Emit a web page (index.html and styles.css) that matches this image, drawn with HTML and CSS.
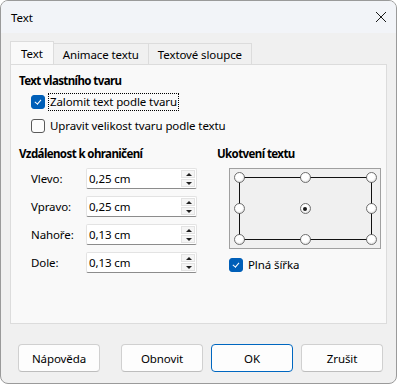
FILE: index.html
```html
<html>
<head>
<link rel="stylesheet" href="styles.css">
</head>
<body>
  <div class="window">
    <div class="titlebar">
      <span class="title">Text</span>
      <svg class="close" width="12" height="12" viewBox="0 0 12 12">
        <path d="M1 1 L11 11 M11 1 L1 11" stroke="#1a1a1a" stroke-width="1" fill="none"/>
      </svg>
    </div>

    <div class="content">
      <div class="tabs">
        <div class="tab active">Text</div>
        <div class="tab">Animace textu</div>
        <div class="tab">Textové sloupce</div>
      </div>

      <div class="panel">
        <div class="heading">Text vlastního tvaru</div>
        <div class="check-row first">
          <span class="checkbox checked"></span>
          <span class="label focused">Zalomit text podle tvaru</span>
        </div>
        <div class="check-row">
          <span class="checkbox"></span>
          <span class="label">Upravit velikost tvaru podle textu</span>
        </div>

        <div class="columns">
          <div class="col-left">
            <div class="heading">Vzdálenost k ohraničení</div>
            <div class="fields">
              <div class="field">
                <span class="field-label">Vlevo:</span>
                <div class="spin"><span class="spin-value">0,25 cm</span><span class="spin-btns"><span class="up"></span><span class="down"></span></span></div>
              </div>
              <div class="field">
                <span class="field-label">Vpravo:</span>
                <div class="spin"><span class="spin-value">0,25 cm</span><span class="spin-btns"><span class="up"></span><span class="down"></span></span></div>
              </div>
              <div class="field">
                <span class="field-label">Nahoře:</span>
                <div class="spin"><span class="spin-value">0,13 cm</span><span class="spin-btns"><span class="up"></span><span class="down"></span></span></div>
              </div>
              <div class="field">
                <span class="field-label">Dole:</span>
                <div class="spin"><span class="spin-value">0,13 cm</span><span class="spin-btns"><span class="up"></span><span class="down"></span></span></div>
              </div>
            </div>
          </div>

          <div class="col-right">
            <div class="heading">Ukotvení textu</div>
            <div class="anchor-box">
              <div class="anchor-rect"></div>
              <div class="anchor-grid">
                <span class="radio"></span><span class="radio"></span><span class="radio"></span>
                <span class="radio"></span><span class="radio selected"></span><span class="radio"></span>
                <span class="radio"></span><span class="radio"></span><span class="radio"></span>
              </div>
            </div>
            <div class="check-row full-width">
              <span class="checkbox checked"></span>
              <span class="label">Plná šířka</span>
            </div>
          </div>
        </div>
      </div>

      <div class="buttons">
        <div class="button help">Nápověda</div>
        <div class="button">Obnovit</div>
        <div class="button default">OK</div>
        <div class="button">Zrušit</div>
      </div>
    </div>
  </div>
</body>
</html>
```

FILE: styles.css
```css
body {
  margin: 0;
  background: #ffffff;
  font-family: "Noto Sans", "Open Sans", sans-serif;
  font-size: 11.5px;
  letter-spacing: -0.1px;
  color: #000000;
}

.window {
  width: 395px;
  height: 382px;
  border: 1px solid #9a9a9a;
  border-radius: 8px;
  background: #f0f0f0;
  overflow: hidden;
}

.titlebar {
  height: 32px;
  background: #f2f4f8;
  display: flex;
  align-items: center;
  justify-content: space-between;
  padding: 0 9px 0 10px;
}

.content {
  padding: 8px 0 0 9px;
}

.tabs {
  display: flex;
  height: 23px;
  align-items: flex-end;
}

.tab {
  height: 21px;
  line-height: 21px;
  padding: 0 9px;
  border: 1px solid #dcdcdc;
  border-bottom: none;
  border-left: none;
  background: #f0f0f0;
  box-sizing: border-box;
}

.tab.active {
  height: 23px;
  line-height: 23px;
  padding: 0 10px;
  background: #f9f9f9;
  border-left: 1px solid #dcdcdc;
}

.panel {
  width: 377px;
  height: 260px;
  box-sizing: border-box;
  border: 1px solid #dcdcdc;
  background: #f9f9f9;
  padding: 8px 8px 0 8px;
}

.heading {
  font-weight: bold;
  letter-spacing: -0.6px;
  height: 16px;
  line-height: 16px;
}

.check-row {
  display: flex;
  align-items: center;
  height: 20px;
  margin-left: 12px;
  margin-top: 4px;
}

.check-row.first {
  margin-top: 3px;
}

.checkbox {
  width: 12px;
  height: 12px;
  border: 1px solid #5a5a5a;
  border-radius: 3px;
  background: #fdfdfd;
  margin-right: 3px;
  flex: none;
}

.checkbox.checked {
  border-color: #005fb8;
  background: #005fb8;
  position: relative;
}

.checkbox.checked::after {
  content: "";
  position: absolute;
  left: 4px;
  top: 2px;
  width: 2.5px;
  height: 5px;
  border: solid #ffffff;
  border-width: 0 1px 1px 0;
  transform: rotate(40deg);
}

.label {
  line-height: 16px;
  padding: 0 1px;
  border: 1px dotted transparent;
}

.label.focused {
  border-color: #000000;
}

.columns {
  display: flex;
  margin-top: 10px;
}

.col-left {
  width: 198px;
  flex: none;
}

.fields {
  margin-top: 6px;
  margin-left: 12px;
  display: flex;
  flex-direction: column;
  gap: 7px;
}

.field {
  display: flex;
  align-items: center;
  height: 21px;
}

.field-label {
  width: 55px;
}

.spin {
  width: 111px;
  height: 21px;
  box-sizing: border-box;
  border: 1px solid #e3e3e3;
  border-bottom-color: #8c8c8c;
  background: #ffffff;
  display: flex;
  align-items: center;
  justify-content: space-between;
  border-radius: 2px;
}

.spin-value {
  padding-left: 2px;
}

.spin-btns {
  width: 14px;
  height: 17px;
  margin-right: 1px;
  display: flex;
  flex-direction: column;
  gap: 1px;
}

.spin-btns span {
  flex: 1;
  background: #f5f5f5;
  border: 1px solid #e3e3e3;
  position: relative;
}

.spin-btns span::after {
  content: "";
  position: absolute;
  left: 3.5px;
  width: 0;
  height: 0;
  border-left: 3px solid transparent;
  border-right: 3px solid transparent;
}

.spin-btns .up::after {
  top: 2px;
  border-bottom: 3.5px solid #202020;
}

.spin-btns .down::after {
  top: 2px;
  border-top: 3.5px solid #202020;
}

.anchor-box {
  position: relative;
  width: 152px;
  height: 81px;
  box-sizing: border-box;
  margin-top: 6px;
  margin-left: 12px;
  border: 1px solid #a0a0a0;
  background: #f0f0f0;
}

.anchor-rect {
  position: absolute;
  inset: 8px 8.5px;
  border: 1.5px solid #111111;
}

.anchor-grid {
  position: absolute;
  inset: 3px 3.5px;
  display: grid;
  grid-template-columns: repeat(3, 11px);
  grid-template-rows: repeat(3, 11px);
  justify-content: space-between;
  align-content: space-between;
}

.radio {
  width: 11px;
  height: 11px;
  box-sizing: border-box;
  border-radius: 50%;
  border: 1px solid #707070;
  background: radial-gradient(circle at 45% 40%, #ffffff 45%, #c8c8c8 100%);
  position: relative;
}

.radio.selected::after {
  content: "";
  position: absolute;
  left: 2.5px;
  top: 2.5px;
  width: 4px;
  height: 4px;
  border-radius: 50%;
  background: #1a1a1a;
}

.check-row.full-width {
  margin-top: 6px;
}

.buttons {
  display: flex;
  gap: 8px;
  margin-top: 20px;
  padding-left: 8px;
}

.button {
  width: 82px;
  height: 28px;
  box-sizing: border-box;
  border: 1px solid #d0d0d0;
  border-bottom-color: #bdbdbd;
  border-radius: 4px;
  background: #fdfdfd;
  display: flex;
  align-items: center;
  justify-content: center;
}

.button.help {
  margin-right: 13px;
}

.button.default {
  border: 1px solid #0067c0;
}
```
